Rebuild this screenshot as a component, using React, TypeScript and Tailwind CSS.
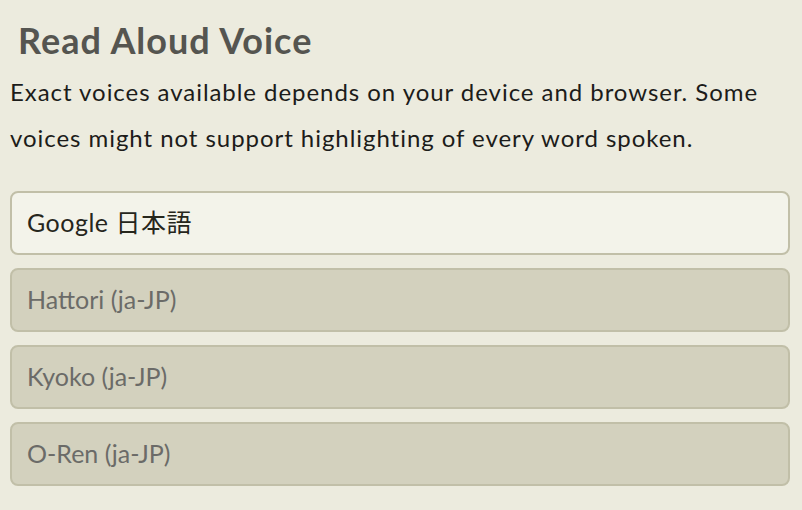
const voices = [
  { name: 'Google 日本語', selected: true },
  { name: 'Hattori (ja-JP)', selected: false },
  { name: 'Kyoko (ja-JP)', selected: false },
  { name: 'O-Ren (ja-JP)', selected: false },
]

export default function App() {
  return (
    <div
      className="min-h-[510px] w-[802px] bg-[#ecebde] pl-[10px] pr-[12px] pt-[16px]"
      style={{ fontFamily: 'Lato, "Noto Sans CJK JP", sans-serif' }}
    >
      <h2 className="pl-[8px] text-[36px] font-bold leading-[48px] tracking-[1px] text-[#555550]">Read Aloud Voice</h2>
      <p className="mt-[5px] text-[24px] leading-[46px] tracking-[0.95px] text-[#1c1c1a]">
        Exact voices available depends on your device and browser. Some voices might not support highlighting of
        every word spoken.
      </p>
      <div className="mt-[30px] flex flex-col gap-[13px]">
        {voices.map((v) => (
          <button
            key={v.name}
            type="button"
            className={
              v.selected
                ? 'flex h-[64px] items-center rounded-[8px] border-2 border-[#c1bfa8] bg-[#f3f3ea] px-[15px] text-left text-[25px] tracking-[0.5px] text-[#26261c]'
                : 'flex h-[64px] items-center rounded-[8px] border-2 border-[#c1bfa8] bg-[#d3d1be] px-[15px] text-left text-[25px] text-[#6b6b68]'
            }
          >
            {v.name}
          </button>
        ))}
      </div>
    </div>
  )
}
